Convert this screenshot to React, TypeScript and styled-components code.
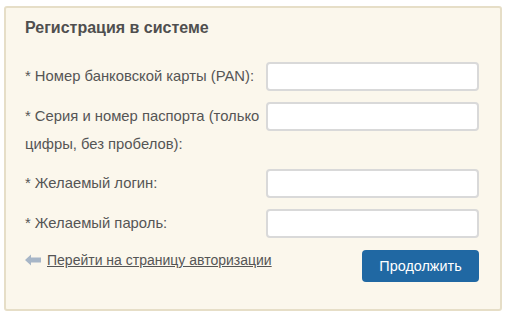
import { createGlobalStyle } from "styled-components";
import styled from "styled-components";

const GlobalStyle = createGlobalStyle`
  body {
    margin: 0;
    background: #ffffff;
    font-family: "Liberation Sans", Arial, sans-serif;
  }
`;

const Panel = styled.div`
  box-sizing: border-box;
  width: 498px;
  height: 305px;
  margin: 6px 0 0 4px;
  padding: 10px 21px 0 19px;
  background: #fbf7ec;
  border: 2px solid #e6dec7;
  border-radius: 3px;
  color: #555555;
`;

const Title = styled.h2`
  margin: 0 0 24px;
  font-size: 16px;
  font-weight: bold;
  line-height: 20px;
  color: #4f4f4f;
`;

const Form = styled.div`
  display: grid;
  grid-template-columns: 241px 213px;
  row-gap: 11px;
`;

const Label = styled.label`
  font-size: 14.8px;
  line-height: 28px;
  color: #555555;
`;

const Input = styled.input`
  box-sizing: border-box;
  width: 213px;
  height: 29px;
  border: 2px solid #d9d9d9;
  border-radius: 4px;
  background: #ffffff;
  outline: none;
`;

const Footer = styled.div`
  display: flex;
  justify-content: space-between;
  align-items: flex-start;
  margin-top: 12px;
`;

const BackLink = styled.a`
  display: flex;
  align-items: center;
  gap: 6px;
  margin-top: 1px;
  font-size: 14px;
  line-height: 18px;
  color: #555555;
  text-decoration: underline;
  cursor: pointer;
`;

const Submit = styled.button`
  box-sizing: border-box;
  width: 117px;
  height: 32px;
  border: none;
  border-radius: 4px;
  background: #2068a3;
  color: #ffffff;
  font-family: "Liberation Sans", Arial, sans-serif;
  font-size: 14.4px;
`;

const ArrowIcon = () => (
  <svg width="16" height="12" viewBox="0 0 16 12">
    <path d="M0 6 L6 0.5 L6 3.5 L16 3.5 L16 8.5 L6 8.5 L6 11.5 Z" fill="#a7b6c7" />
  </svg>
);

const fields = [
  "* Номер банковской карты (PAN):",
  "* Серия и номер паспорта (только цифры, без пробелов):",
  "* Желаемый логин:",
  "* Желаемый пароль:",
];

export default function App() {
  return (
    <>
      <GlobalStyle />
      <Panel>
        <Title>Регистрация в системе</Title>
        <Form>
          {fields.map((f) => (
            <>
              <Label key={f + "l"}>{f}</Label>
              <Input key={f + "i"} type={f.includes("пароль") ? "password" : "text"} />
            </>
          ))}
        </Form>
        <Footer>
          <BackLink>
            <ArrowIcon />
            Перейти на страницу авторизации
          </BackLink>
          <Submit>Продолжить</Submit>
        </Footer>
      </Panel>
    </>
  );
}
